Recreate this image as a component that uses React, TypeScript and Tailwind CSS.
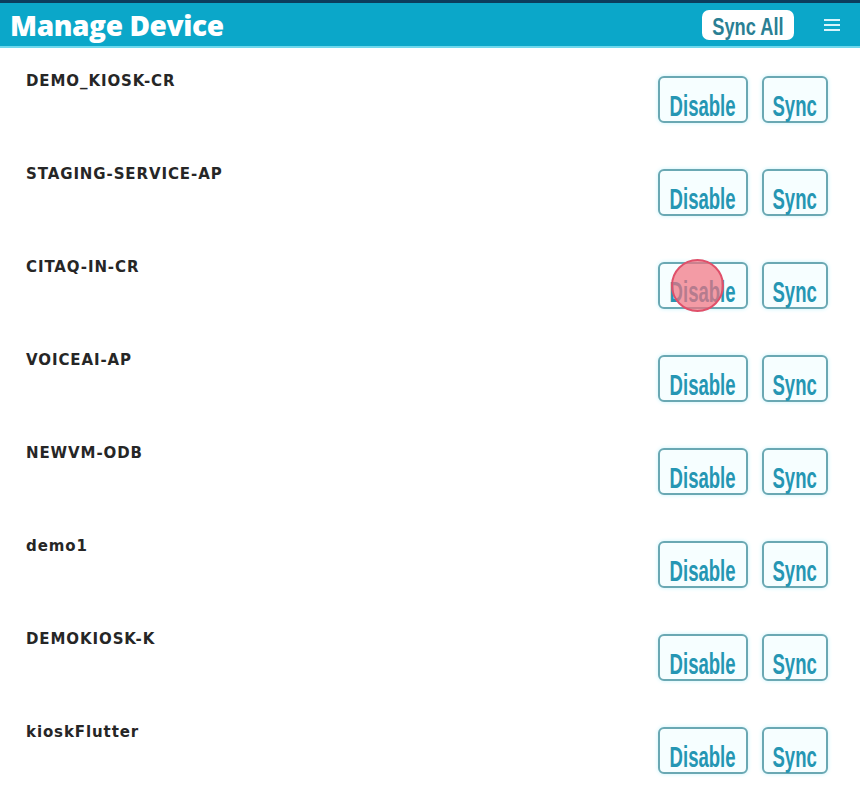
import React from 'react';

const devices = [
	'DEMO_KIOSK-CR',
	'STAGING-SERVICE-AP',
	'CITAQ-IN-CR',
	'VOICEAI-AP',
	'NEWVM-ODB',
	'demo1',
	'DEMOKIOSK-K',
	'kioskFlutter',
];

const condensed = { fontFamily: '"Liberation Sans", Arial, sans-serif' };

function ActionButton({ label, width }: { label: string; width: string }) {
	return (
		<button
			className={`${width} h-[47px] rounded-[6px] border-2 border-[#6aa8b3] bg-[#f6feff] shadow-[0_0_4px_#c8f3fb] flex items-center justify-center pt-[14px]`}
		>
			<span
				className="inline-block scale-x-[0.64] text-[#2596b3] text-[29px] font-bold leading-none whitespace-nowrap"
				style={condensed}
			>
				{label}
			</span>
		</button>
	);
}

export default function App() {
	return (
		<div className="relative w-[860px] h-[791px] overflow-hidden bg-white">
			{/* Header */}
			<div className="h-[48px] bg-[#0ba7c9] border-t-[3px] border-[#0c3d5c] border-b-2 border-b-[#6fd8ec] flex items-center pl-[10px] pr-[20px]">
				<h1 className="text-[28px] font-extrabold text-white tracking-[-0.4px] leading-none" style={{ fontFamily: '"Open Sans", sans-serif' }}>
					Manage Device
				</h1>
				<div className="ml-auto flex items-center gap-[30px]">
					<button className="w-[92px] h-[30px] rounded-[7px] bg-white flex items-center justify-center pt-[4px]">
						<span
							className="inline-block scale-x-[0.76] text-[#2a7f94] text-[24px] font-bold leading-none whitespace-nowrap"
							style={condensed}
						>
							Sync All
						</span>
					</button>
					<div className="flex flex-col gap-[3px] w-[16px]">
						<span className="h-[2px] bg-[#d8f4fb]" />
						<span className="h-[2px] bg-[#d8f4fb]" />
						<span className="h-[2px] bg-[#d8f4fb]" />
					</div>
				</div>
			</div>

			{/* Device list */}
			<div className="flex flex-col pl-[26px] pr-[32px]">
				{devices.map((name) => (
					<div key={name} className="h-[93px] flex justify-between">
						<div className="pt-[26px] text-[15px] font-bold tracking-[0.9px] text-[#262626] leading-none" style={{ fontFamily: '"DejaVu Sans", sans-serif' }}>
							{name}
						</div>
						<div className="flex gap-[14px] pt-[28px]">
							<ActionButton label="Disable" width="w-[90px]" />
							<ActionButton label="Sync" width="w-[66px]" />
						</div>
					</div>
				))}
			</div>

			{/* Touch indicator */}
			<div className="absolute left-[671px] top-[259px] w-[53px] h-[53px] rounded-full bg-[#f2707f]/70 border-2 border-[#e0506a]" />
		</div>
	);
}
